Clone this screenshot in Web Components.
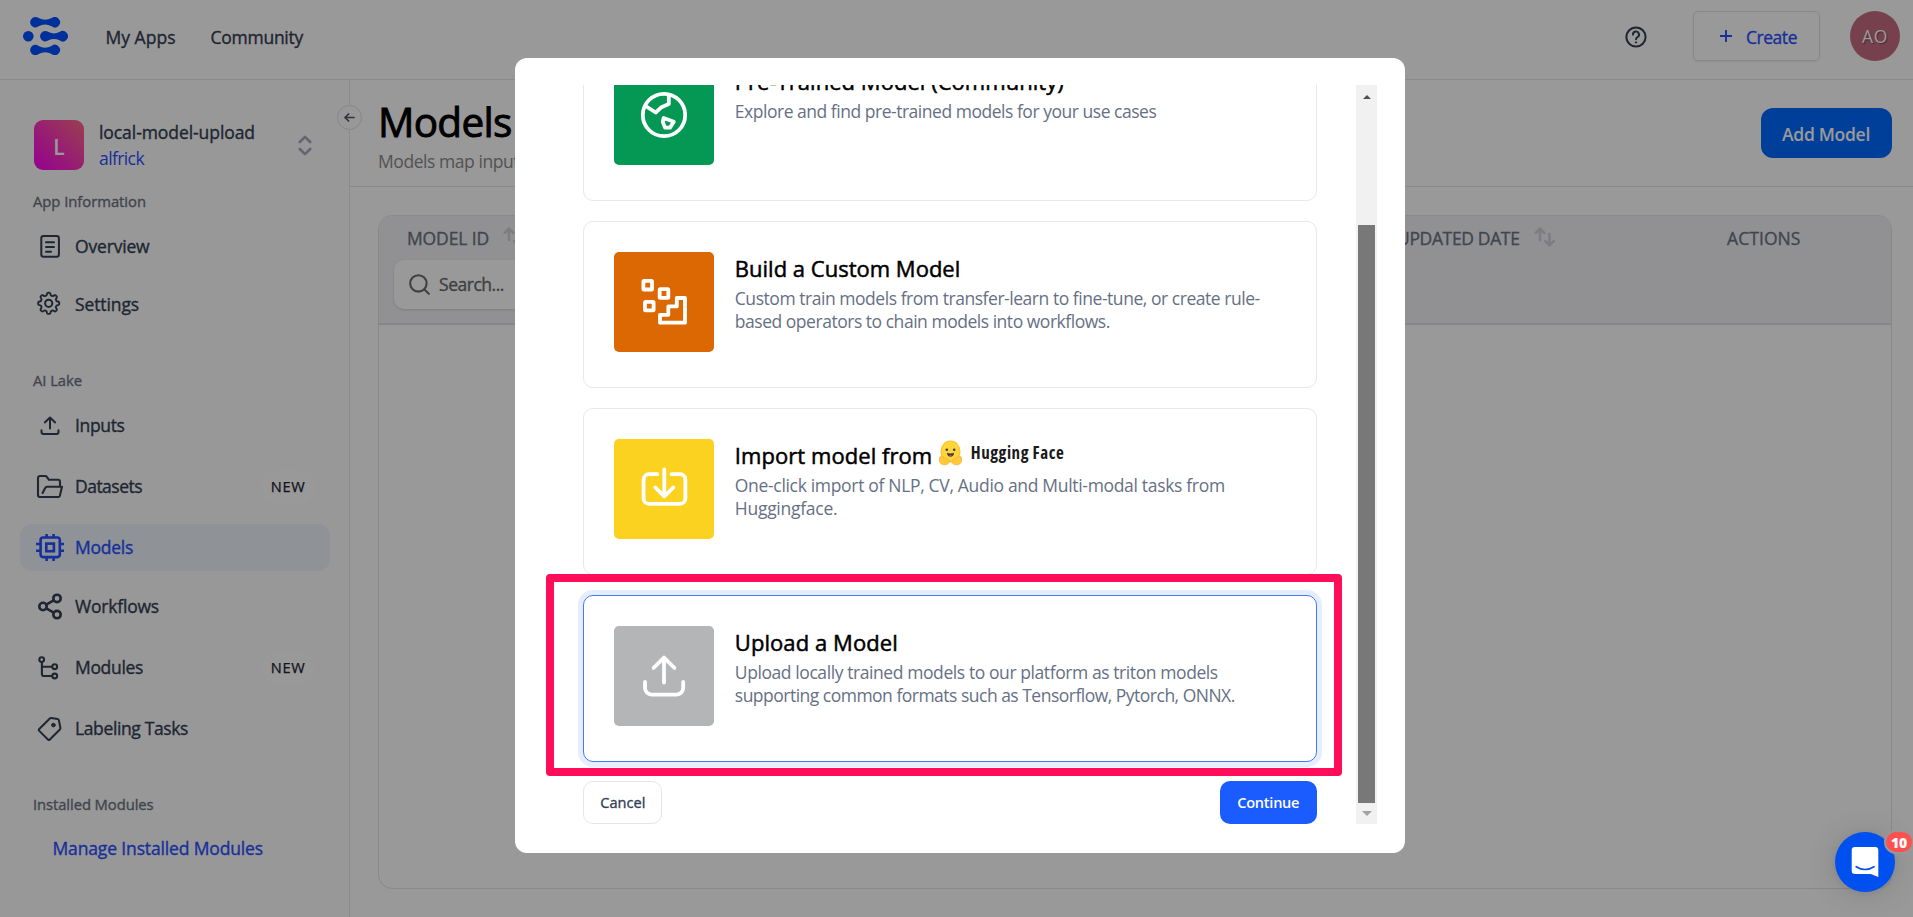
<!DOCTYPE html>
<html lang="en">
<head>
<meta charset="utf-8">
<title>Models</title>
<style>
html,body{margin:0;height:100%;overflow:hidden;background:#fff}
body{font-family:"Open Sans","Noto Sans",sans-serif;font-size:17.5px;color:#344054}
</style>
</head>
<body>
<model-app></model-app>
<script>
const BASE = `*{box-sizing:border-box} svg{display:block;fill:none;stroke:currentColor;stroke-linecap:round;stroke-linejoin:round;flex:none}`;
// Medium weight: regular outlines thickened slightly.
const MEDIUM = `-webkit-text-stroke:.35px currentColor`;
function define(name, render) {
  customElements.define(name, class extends HTMLElement {
    connectedCallback() {
      if (this.shadowRoot) return;
      const t = document.createElement('template');
      const [css, html] = render(this);
      t.innerHTML = `<style>${BASE}${css}</style>${html}`;
      this.attachShadow({mode: 'open'}).appendChild(t.content.cloneNode(true));
    }
  });
}

// Text run whose letter spacing is tuned so that it fills the width "w".
customElements.define('fit-text', class extends HTMLElement {
  connectedCallback() {
    if (this.shadowRoot) return;
    this.attachShadow({mode: 'open'}).innerHTML = `<style>:host{display:inline-block;white-space:pre}</style><slot></slot>`;
    const w = parseFloat(this.getAttribute('w'));
    requestAnimationFrame(() => this.fit(w));
    this.fit(w);
  }
  fit(w) {
    this.style.letterSpacing = '0px';
    const natural = this.getBoundingClientRect().width;
    if (natural && w) this.style.letterSpacing = ((w - natural) / this.textContent.length) + 'px';
  }
});

// Gear outline with eight rounded teeth.
function gearPath(cx, cy) {
  let d = '';
  for (let i = 0; i < 160; i++) {
    const a = i / 160 * Math.PI * 2;
    const r = 9.3 + 1.25 * Math.tanh(2 * Math.cos(8 * a)) / Math.tanh(2);
    d += (i ? 'L' : 'M') + (cx + r * Math.sin(a)).toFixed(2) + ' ' + (cy - r * Math.cos(a)).toFixed(2);
  }
  return d + 'Z';
}
const NAV_ICONS = {
  overview: `<rect x="7.3" y="6" width="17.6" height="20.8" rx="2.2"/><path d="M12 12.3h8M12 17h8M12 21.8h5"/>`,
  settings: `<path stroke-width="1.9" d="${gearPath(14.7,15.3)}"/><circle cx="14.7" cy="15.3" r="3.6"/>`,
  inputs: `<path d="M16 18.5V7.8M10.8 12.4L16 7.6l5.2 4.8M7.5 20.3v1.6a2 2 0 0 0 2 2h13a2 2 0 0 0 2-2v-1.6"/>`,
  datasets: `<path stroke-width="2.1" d="M26 15.2v-4.4a2 2 0 0 0-2-2h-9l-2.6-3.4a1 1 0 0 0-.8-.4H6a2 2 0 0 0-2 2V24a2 2 0 0 0 2 2h18.4a1.5 1.5 0 0 0 1.4-1L28 15.8H13a2 2 0 0 0-1.8 1.2L8.6 22"/>`,
  models: `<g stroke-width="2.6" stroke-linecap="butt"><rect x="6.6" y="5.5" width="19.2" height="19.6" rx="2.5"/><rect x="12.3" y="11.6" width="7.6" height="7.6" stroke-linejoin="miter"/><path d="M12.6 2v4M19.6 2v4M12.6 25v4M19.6 25v4M2 12h4M2 18.7h4M26 12h4M26 18.7h4"/></g>`,
  workflows: `<g stroke-width="2.6"><circle cx="9" cy="15.5" r="3.7"/><circle cx="23" cy="7.4" r="3.7"/><circle cx="23" cy="23.6" r="3.7"/><path d="M12.3 13.6l7.4-4.3M12.3 17.4l7.4 4.3"/></g>`,
  modules: `<g stroke-width="2.1"><circle cx="7.7" cy="7.6" r="2.4"/><circle cx="20.7" cy="14.7" r="2.4"/><circle cx="20.7" cy="24" r="2.4"/><path d="M7.9 10v12a2 2 0 0 0 2 2h8M7.9 14.7h10"/></g>`,
  labeling: `<path d="M17.3 5l6.4 1.1a1.4 1.4 0 0 1 1.2 1.2L26.4 15a1.8 1.8 0 0 1-.5 1.5L15.6 26.7a1 1 0 0 1-1.4 0L5 17.6a1 1 0 0 1 0-1.4L15.8 5.5a1.8 1.8 0 0 1 1.5-.5z"/><circle cx="19.4" cy="12.1" r="1.8" fill="currentColor" stroke-width="1"/>`
};
define('nav-item', el => [`
:host{display:flex;align-items:center;height:47px;margin:0 19px 0 20px;padding:0 15px 0 14px;border-radius:12px;${MEDIUM}}
:host([active]){background:#eef3fc;color:#2352ff}
svg{width:32px;height:32px;stroke-width:2}
.t{margin-left:9px;flex:1;line-height:24px;margin-top:-1px}
.b{width:54px;height:33px;border-radius:17px;background:#fff;color:#20232e;font-size:14.6px;line-height:32px;text-align:center;-webkit-text-stroke-width:.25px}
`, `<svg viewBox="0 0 32 32">${NAV_ICONS[el.getAttribute('icon')]}</svg><span class="t"><slot></slot></span>${el.hasAttribute('badge') ? '<span class="b"><fit-text w="34.5">NEW</fit-text></span>' : ''}`]);

define('app-header', () => [`
:host{display:flex;align-items:center;height:80px;border-bottom:1px solid #e9e9e9;padding:0 13px 0 23px;${MEDIUM}}
.logo{width:45px;height:38px;margin:-7px 37.5px 0 0;stroke:none;fill:#0050ff}
nav{display:flex;gap:35px;margin-top:-6px}
.help{margin:-6px 46px 0 auto}
.create{display:flex;align-items:center;width:127px;height:50px;margin:-7px 30px 0 0;padding-left:26px;gap:14px;border:1px solid #e2e3e6;border-radius:5px;color:#2b50ff;box-shadow:0 1px 2px #0001}
.create span{padding-top:2px}
.av{width:50px;height:50px;margin-top:-7px;border-radius:50%;background:#c56c80;color:#fff;text-align:center;line-height:50px;-webkit-text-stroke-width:0;font-size:17.5px;text-shadow:1px 1px 1px #0006}
`, `<svg class="logo" viewBox="0 0 45 38"><defs><path id="bar" d="M5.2 0a5.2 5.2 0 0 1 3.2 1.1Q14.9 4.6 21.4 1.1a5.2 5.2 0 1 1 0 8.2Q14.9 5.8 8.4 9.3A5.2 5.2 0 1 1 5.2 0z"/></defs><use href="#bar" x="7.2" y="0"/><use href="#bar" x="7.2" y="27.8"/><circle cx="5.3" cy="19.2" r="5.3"/><path d="M22.3 14a5.2 5.2 0 0 1 3.2 1.1q5.5 2.8 11 0a5.2 5.2 0 1 1 0 8.2q-5.5-2.8-11 0a5.2 5.2 0 1 1-3.2-9.3z"/></svg>
<nav><fit-text w="70">My Apps</fit-text><fit-text w="92.5">Community</fit-text></nav>
<svg class="help" width="22" height="22" viewBox="0 0 22 22" stroke-width="2"><circle cx="11" cy="11" r="9.6"/><path d="M8 8.6a3 3 0 1 1 4.6 2.4c-1 .7-1.6 1.1-1.6 2.3"/><circle cx="11" cy="16.4" r=".7" fill="currentColor" stroke-width="1"/></svg>
<div class="create"><svg width="12" height="12" viewBox="0 0 12 12" stroke-width="1.9" stroke-linecap="butt"><path d="M6 0v12M0 6h12"/></svg><span><fit-text w="51">Create</fit-text></span></div>
<div class="av"><fit-text w="26">AO</fit-text></div>`]);

define('side-bar', () => [`
:host{display:flex;flex-direction:column;width:350px;height:837px;border-right:1px solid #e9e9e9;background:#fdfdfd}
.app{display:flex;height:50px;margin:40px 37.5px 0 34px;align-items:center;flex:none}
.tile{width:50px;height:50px;border-radius:9px;background:linear-gradient(45deg,#fa00f0,#ff6c85);color:#fff;font-size:21px;line-height:54px;text-align:center;font-weight:600}
.n{margin-left:15px;flex:1;display:flex;flex-direction:column;height:50px;margin-top:-1px}
.n .a{line-height:25px;${MEDIUM}}.n .b{color:#2b50ff;line-height:27px}
.chev{color:#a5abb8}
.lab{margin-left:33px;font-size:14.8px;line-height:18px;height:20px;color:#6c7482;${MEDIUM};flex:none}
nav-item{flex:none}
`, `<div class="app"><div class="tile">L</div><div class="n"><span class="a"><fit-text w="156">local-model-upload</fit-text></span><span class="b"><fit-text w="45">alfrick</fit-text></span></div>
<svg class="chev" width="14" height="21" viewBox="0 0 14 21" stroke-width="2.6"><path d="M1.8 7L7 1.8 12.2 7M1.8 14L7 19.2 12.2 14"/></svg></div>
<div class="lab" style="margin-top:22px"><fit-text w="113">App Information</fit-text></div>
<nav-item icon="overview" style="margin-top:10.5px"><fit-text w="74.5">Overview</fit-text></nav-item>
<nav-item icon="settings" style="margin-top:11px"><fit-text w="64">Settings</fit-text></nav-item>
<div class="lab" style="margin-top:43px"><fit-text w="49">AI Lake</fit-text></div>
<nav-item icon="inputs" style="margin-top:11.5px"><fit-text w="49.5">Inputs</fit-text></nav-item>
<nav-item icon="datasets" badge style="margin-top:14px"><fit-text w="67">Datasets</fit-text></nav-item>
<nav-item icon="models" active style="margin-top:14px"><fit-text w="58">Models</fit-text></nav-item>
<nav-item icon="workflows" style="margin-top:12px"><fit-text w="84">Workflows</fit-text></nav-item>
<nav-item icon="modules" badge style="margin-top:14px"><fit-text w="68">Modules</fit-text></nav-item>
<nav-item icon="labeling" style="margin-top:14px"><fit-text w="113">Labeling Tasks</fit-text></nav-item>
<div class="lab" style="margin-top:43px"><fit-text w="120.5">Installed Modules</fit-text></div>
<div style="margin:21px 0 0 52.5px;line-height:24px;color:#2b50ff;${MEDIUM}"><fit-text w="210.500">Manage Installed Modules</fit-text></div>`]);

const SORT = `<svg width="22" height="20" viewBox="0 0 22 20" stroke-width="2.6" style="color:#cfd1d8"><path d="M6 13V1.8M1.8 5.8L6 1.6l4.2 4.2M15.5 7v11M11.3 14.2l4.2 4.2 4.2-4.2"/></svg>`;
define('model-table', () => [`
:host{display:block;width:1514px;height:674px;margin:28px 0 0 28px;border:1px solid #e4e5e8;border-radius:14px;overflow:hidden}
.head{height:109px;background:#f2f2f5;border-bottom:2px solid #dedfe3;display:grid;grid-template-columns:989px 330px 1fr;color:#6b7485;${MEDIUM};padding-left:15px}
.row{display:flex;height:24px;line-height:24px;margin-top:10px}
.row svg{margin-top:1px}
.search{display:flex;align-items:center;width:300px;height:49px;margin-top:9.5px;background:#fff;border-radius:10px;box-shadow:0 1px 3px #0002;padding-left:15px;gap:9px;color:#6b6b6b}
`, `<div class="head"><div><div class="row" style="padding-left:13px;gap:14px"><fit-text w="82">MODEL ID</fit-text>${SORT}</div>
<div class="search"><svg width="21" height="21" viewBox="0 0 21 21" stroke-width="2.1"><circle cx="9.4" cy="9.4" r="8.2"/><path d="M15.4 15.4l4.4 4.4"/></svg><fit-text w="65">Search...</fit-text></div></div>
<div class="row" style="padding-left:14px;gap:14px"><fit-text w="122.5">UPDATED DATE</fit-text>${SORT}</div>
<div class="row" style="padding-left:14px"><fit-text w="73.5">ACTIONS</fit-text></div></div>`]);

define('models-page', () => [`
:host{display:block;flex:1;position:relative;min-width:0;height:837px}
.top{display:flex;justify-content:space-between;height:107px;border-bottom:1px solid #e4e5e7;padding:12px 21.5px 0 29px}
h1{margin:0 0 0 -1px;font-size:40.5px;line-height:60px;font-weight:400;-webkit-text-stroke:.9px #000;color:#000}
p{margin:-3px 0 0 -1px;line-height:24px;color:#8a8a8a}
.add{width:131px;height:50px;margin-top:16px;border-radius:12px;background:#0069ff;color:#fff;font-weight:600;line-height:53px;text-align:center}
.col{position:absolute;left:-13px;top:25px;width:25px;height:25px;border:1px solid #e0e1e4;border-radius:50%;background:#fdfdfd;display:grid;place-items:center;color:#555566}
`, `<div class="top"><div><h1><fit-text w="133.5">Models</fit-text></h1><p><fit-text w="149">Models map inputs</fit-text></p></div><div class="add"><fit-text w="88">Add Model</fit-text></div></div>
<div class="col"><svg width="11" height="9" viewBox="0 0 11 9" stroke-width="1.7"><path d="M10 4.5H1M4.6 1L1 4.5 4.6 8"/></svg></div><model-table></model-table>`]);

const CARD_ICONS = {
  globe: `<circle cx="50" cy="50" r="21.2"/><path d="M54.8 30v9l-7.3 3.2-5.8 5.3-9.4-6M49.6 53l10.2 3.8-3.8 5.8h-5l-2.2-5.8z"/>`,
  custom: `<rect x="29.4" y="28.9" width="8.6" height="8.6" rx=".6"/><rect x="45.7" y="37.2" width="8.6" height="8.6" rx=".6"/><rect x="31" y="49.8" width="8.6" height="8.6" rx=".6"/><path d="M46 62.8h8.3v-8.4h8.5v-8.4H71v24.7H46z"/>`,
  import: `<path d="M43.3 35.2H35a5.4 5.4 0 0 0-5.4 5.4v18.8a5.4 5.4 0 0 0 5.4 5.4h31a5.4 5.4 0 0 0 5.4-5.4V40.6a5.4 5.4 0 0 0-5.4-5.4h-8.3M50.3 30.5v26.5M41.3 48.5l9 9 9-9"/>`,
  upload: `<path d="M50 56.5V32M39.5 42L50 31.6 60.5 42M31 56v6a6.6 6.6 0 0 0 6.6 6.6h25a6.6 6.6 0 0 0 6.6-6.6v-6"/>`
};
define('option-card', el => [`
:host{display:flex;height:167px;flex:none;border:1px solid #e6e8ee;border-radius:10px;padding:30px 0 0 30px;background:#fff}
:host([selected]){border-color:#4379fb;box-shadow:0 0 0 5px #e5edff}
.ic{width:100px;height:100px;border-radius:5px;background:${el.getAttribute('color')};color:#fff;flex:none}
.ic svg{stroke-width:3.8}
.tx{margin-left:20.5px;padding-top:1.5px;color:#667085;font-size:17.5px}
.tt{font-size:22px;line-height:30px;color:#000;-webkit-text-stroke:.5px #000;display:flex}
.ds{line-height:23px;display:flex;flex-direction:column;align-items:flex-start;margin-top:4px}
`, `<div class="ic"><svg width="100" height="100" viewBox="0 0 100 100">${CARD_ICONS[el.getAttribute('icon')]}</svg></div><div class="tx"><div class="tt"><slot name="title"></slot></div><div class="ds"><slot></slot></div></div>`]);

define('hugging-logo', () => [`
:host{display:flex;margin-left:6px;-webkit-text-stroke-width:0}
.f{stroke:none}
span{font:700 17px/30px "Open Sans","Noto Sans",sans-serif;font-stretch:75%;color:#1a1a1a;margin:-2px 0 0 7.5px;height:30px}
`, `<svg class="f" width="25" height="26" viewBox="0 0 25 26"><ellipse cx="12.5" cy="11.5" rx="10" ry="11" fill="#ffc022"/><ellipse cx="12.5" cy="11.3" rx="9" ry="10" fill="#ffd53a"/><path d="M1.8 17.2c1-1.6 3-1 4.6.8 2 .2 5 2 4.6 4.2-1 3-5.6 3-7.8 1.8-1.8-1.6-2.4-4.6-1.4-6.8zM23.2 17.2c-1-1.6-3-1-4.6.8-2 .2-5 2-4.6 4.2 1 3 5.6 3 7.8 1.8 1.8-1.6 2.4-4.6 1.4-6.8z" fill="#ffc93a" stroke="#f7aa3a" stroke-width=".7"/><circle cx="8.8" cy="9.8" r="1.3" fill="#3b3d4a"/><circle cx="16.2" cy="9.8" r="1.3" fill="#3b3d4a"/><path d="M9 12.8q3.5 1.6 7 0c0 2.6-1.5 4-3.5 4s-3.5-1.400-3.500-4z" fill="#3b3d4a"/><path d="M10.800 15.900q1.700-1.300 3.400 0-1.700 1.200-3.400 0z" fill="#f25a55"/></svg><span><fit-text w="93.5">Hugging Face</fit-text></span>`]);

define('scroll-bar', () => [`
:host{display:flex;flex-direction:column;width:21px;height:739px;background:#f1f1f1;align-items:center}
svg{stroke:none}
.th{width:17px;height:578px;margin-top:auto;background:#787878}
.e{height:21px;display:grid;place-items:center}
`, `<svg style="margin-top:10px" width="8" height="4" viewBox="0 0 8 4"><path d="M0 4L4 0l4 4z" fill="#505050"/></svg><div class="th"></div><div class="e"><svg width="10" height="5" viewBox="0 0 10 5"><path d="M0 0h10L5 5z" fill="#a3a3a3"/></svg></div>`]);

define('model-dialog', () => [`
:host{position:absolute;left:515px;top:57.5px;width:890px;height:795px;border-radius:12px;background:#fff;display:flex;padding-top:27.5px}
.view{width:784px;margin-left:57px;padding:0 39.500px 0 11.300px;height:739px;overflow:hidden;flex:none}
.list{display:flex;flex-direction:column;gap:20px;margin-top:-51.5px}
.act{display:flex;justify-content:space-between;margin-top:19.5px}
.btn{height:43px;border-radius:10px;font-size:14.6px;line-height:43px;text-align:center}
.c{width:79px;border:1px solid #e4e6ee;line-height:41px;color:#344054;${MEDIUM}}
.k{width:96.5px;background:#1a5cff;color:#fff;font-weight:600}
.mark{position:absolute;left:31px;top:516.5px;width:796px;height:202px;border:8px solid #ff0d5b;border-radius:4px}
`, `<div class="view"><div class="list">
<option-card icon="globe" color="#059855"><fit-text slot="title" w="329">Pre-Trained Model (Community)</fit-text><fit-text w="421.5">Explore and find pre-trained models for your use cases</fit-text></option-card>
<option-card icon="custom" color="#dc6803"><fit-text slot="title" w="225.5">Build a Custom Model</fit-text><fit-text w="525">Custom train models from transfer-learn to fine-tune, or create rule-</fit-text><fit-text w="375">based operators to chain models into workflows.</fit-text></option-card>
<option-card icon="import" color="#fbd220"><fit-text slot="title" w="197.5">Import model from</fit-text><hugging-logo slot="title"></hugging-logo><fit-text w="490">One-click import of NLP, CV, Audio and Multi-modal tasks from</fit-text><fit-text w="102.5">Huggingface.</fit-text></option-card>
<option-card icon="upload" color="#b4b5b7" selected><fit-text slot="title" w="163">Upload a Model</fit-text><fit-text w="483">Upload locally trained models to our platform as triton models</fit-text><fit-text w="500">supporting common formats such as Tensorflow, Pytorch, ONNX.</fit-text></option-card>
</div><div class="act"><div class="btn c"><fit-text w="45">Cancel</fit-text></div><div class="btn k"><fit-text w="62">Continue</fit-text></div></div></div>
<scroll-bar></scroll-bar><div class="mark"></div>`]);

define('chat-launcher', () => [`
:host{position:absolute;left:1835px;top:832px;width:60px;height:60px;border-radius:50%;background:#0050f0;box-shadow:0 1px 6px #0001,0 2px 32px #0002}
svg{stroke:none}
.b{position:absolute;left:51px;top:0;width:26px;height:20px;border-radius:10px;background:#ff5050;color:#fff;font-weight:800;font-size:14px;line-height:22px;text-align:center}
.cut{position:absolute;left:49px;top:-2px;width:30px;height:24px;border-radius:12px;background:#979797}
`, `<svg width="60" height="60" viewBox="0 0 60 60"><path d="M20 15h20a3.3 3.3 0 0 1 3.3 3.3V45l-7.6-3H20a3.3 3.3 0 0 1-3.3-3.3V18.3A3.3 3.3 0 0 1 20 15z" fill="#fff"/><path d="M21.2 34.7q8.8 5.6 17.8 0" fill="none" stroke="#0050f0" stroke-width="1.7"/></svg><div class="cut"></div><div class="b"><fit-text w="16">10</fit-text></div>`]);

define('model-app', () => [`
:host{display:block;position:relative;width:1913px;height:917px;overflow:hidden;background:#fff}
.m{display:flex}
.shade{position:absolute;inset:0;background:rgba(0,0,0,.4)}
`, `<app-header></app-header><div class="m"><side-bar></side-bar><models-page></models-page></div><div class="shade"></div><model-dialog></model-dialog><chat-launcher></chat-launcher>`]);
</script>
</body>
</html>
